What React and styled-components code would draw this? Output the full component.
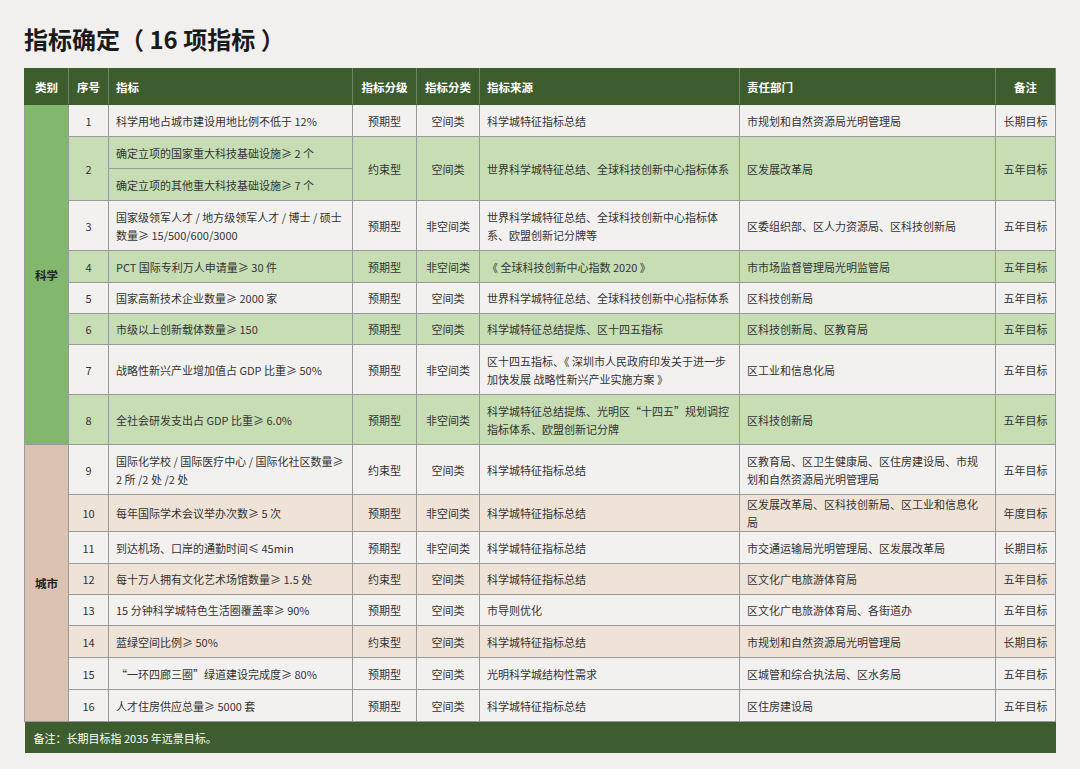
import React from 'react';
import styled, { createGlobalStyle } from 'styled-components';

const Global = createGlobalStyle`
  body {
    margin: 0;
    background: #f2f0ef;
    font-family: "Noto Sans CJK SC", "Noto Sans", sans-serif;
    color: #333;
  }
`

const Page = styled.div`
  padding: 22px 24px 0 24px;
  width: 1031px;
`

const Title = styled.h1`
  margin: 0 0 12px 0;
  font-size: 24px;
  font-weight: 700;
  color: #1a1a1a;
  line-height: 34px;
`

const Table = styled.table`
  width: 1031px;
  border-collapse: collapse;
  table-layout: fixed;
  font-size: 11px;
  line-height: 18px;
`

const Head = styled.th`
  background: #3d5d2f;
  color: #fff;
  font-weight: 700;
  font-size: 11.5px;
  height: 35px;
  padding: 0 7px;
  text-align: ${p => (p.$left ? 'left' : 'center')};
  border: 1px solid #3d5d2f;
  border-right-color: #6d8563;
`

const Row = styled.tr`
  height: ${p => p.$h}px;
  background: ${p => p.$bg};
`

const Cell = styled.td`
  border: 1px solid #9a9a9a;
  padding: 0 7px;
  text-align: ${p => (p.$left ? 'left' : 'center')};
  vertical-align: middle;
  color: #333;
`

const Cat = styled.td`
  border: 1px solid #9a9a9a;
  background: ${p => p.$bg};
  text-align: center;
  font-weight: 700;
  font-size: 11.5px;
  color: #222;
`

const Foot = styled.td`
  background: #3d5d2f;
  color: #fff;
  height: 31px;
  padding: 0 9px;
  font-size: 11px;
`

const W = '#f3f1f0', G = '#c7deb5', B = '#efe3d8';

const sci = [
  [1, '科学用地占城市建设用地比例不低于 12%', '预期型', '空间类', '科学城特征指标总结', '市规划和自然资源局光明管理局', '长期目标', W, 32],
  [2, null, '约束型', '空间类', '世界科学城特征总结、全球科技创新中心指标体系', '区发展改革局', '五年目标', G, 32],
  [3, '国家级领军人才 / 地方级领军人才 / 博士 / 硕士 数量≥ 15/500/600/3000', '预期型', '非空间类', '世界科学城特征总结、全球科技创新中心指标体系、欧盟创新记分牌等', '区委组织部、区人力资源局、区科技创新局', '五年目标', W, 50],
  [4, 'PCT 国际专利万人申请量≥ 30 件', '预期型', '非空间类', '《 全球科技创新中心指数 2020 》', '市市场监督管理局光明监管局', '五年目标', G, 32],
  [5, '国家高新技术企业数量≥ 2000 家', '预期型', '空间类', '世界科学城特征总结、全球科技创新中心指标体系', '区科技创新局', '五年目标', W, 31],
  [6, '市级以上创新载体数量≥ 150', '预期型', '空间类', '科学城特征总结提炼、区十四五指标', '区科技创新局、区教育局', '五年目标', G, 31],
  [7, '战略性新兴产业增加值占 GDP 比重≥ 50%', '预期型', '非空间类', '区十四五指标、《 深圳市人民政府印发关于进一步加快发展 战略性新兴产业实施方案 》', '区工业和信息化局', '五年目标', W, 50],
  [8, '全社会研发支出占 GDP 比重≥ 6.0%', '预期型', '非空间类', '科学城特征总结提炼、光明区“十四五”规划调控指标体系、欧盟创新记分牌', '区科技创新局', '五年目标', G, 50],
];

const city = [
  [9, '国际化学校 / 国际医疗中心 / 国际化社区数量≥ 2 所 /2 处 /2 处', '约束型', '空间类', '科学城特征指标总结', '区教育局、区卫生健康局、区住房建设局、市规划和自然资源局光明管理局', '五年目标', W, 50],
  [10, '每年国际学术会议举办次数≥ 5 次', '预期型', '非空间类', '科学城特征指标总结', '区发展改革局、区科技创新局、区工业和信息化局', '年度目标', B, 31],
  [11, '到达机场、口岸的通勤时间≤ 45min', '预期型', '非空间类', '科学城特征指标总结', '市交通运输局光明管理局、区发展改革局', '长期目标', W, 32],
  [12, '每十万人拥有文化艺术场馆数量≥ 1.5 处', '约束型', '空间类', '科学城特征指标总结', '区文化广电旅游体育局', '五年目标', B, 31],
  [13, '15 分钟科学城特色生活圈覆盖率≥ 90%', '预期型', '空间类', '市导则优化', '区文化广电旅游体育局、各街道办', '五年目标', W, 31],
  [14, '蓝绿空间比例≥ 50%', '约束型', '空间类', '科学城特征指标总结', '市规划和自然资源局光明管理局', '长期目标', B, 32],
  [15, '“一环四廊三圈”绿道建设完成度≥ 80%', '预期型', '空间类', '光明科学城结构性需求', '区城管和综合执法局、区水务局', '五年目标', W, 32],
  [16, '人才住房供应总量≥ 5000 套', '预期型', '空间类', '科学城特征指标总结', '区住房建设局', '五年目标', W, 32],
];

function Rows({ data, label, catBg }) {
  const span = data.reduce((n, r) => n + (r[1] === null ? 2 : 1), 0);
  const out = [];
  data.forEach((r, i) => {
    const [no, name, lvl, kind, src, dept, note, bg, h] = r;
    const cat = i === 0 ? <Cat rowSpan={span} $bg={catBg}>{label}</Cat> : null;
    if (name === null) {
      out.push(
        <Row key={no + 'a'} $bg={bg} $h={h}>
          {cat}
          <Cell rowSpan={2}>{no}</Cell>
          <Cell $left>确定立项的国家重大科技基础设施≥ 2 个</Cell>
          <Cell rowSpan={2}>{lvl}</Cell>
          <Cell rowSpan={2}>{kind}</Cell>
          <Cell rowSpan={2} $left>{src}</Cell>
          <Cell rowSpan={2} $left>{dept}</Cell>
          <Cell rowSpan={2}>{note}</Cell>
        </Row>,
        <Row key={no + 'b'} $bg={bg} $h={h}>
          <Cell $left>确定立项的其他重大科技基础设施≥ 7 个</Cell>
        </Row>
      );
    } else {
      out.push(
        <Row key={no} $bg={bg} $h={h}>
          {cat}
          <Cell>{no}</Cell>
          <Cell $left>{name}</Cell>
          <Cell>{lvl}</Cell>
          <Cell>{kind}</Cell>
          <Cell $left>{src}</Cell>
          <Cell $left>{dept}</Cell>
          <Cell>{note}</Cell>
        </Row>
      );
    }
  });
  return out;
}

export default function App() {
  return (
    <Page>
      <Global />
      <Title>指标确定（ 16 项指标 ）</Title>
      <Table>
        <colgroup>
          <col style={{ width: 44 }} />
          <col style={{ width: 40 }} />
          <col style={{ width: 244 }} />
          <col style={{ width: 64 }} />
          <col style={{ width: 63 }} />
          <col style={{ width: 260 }} />
          <col style={{ width: 256 }} />
          <col style={{ width: 60 }} />
        </colgroup>
        <thead>
          <tr>
            <Head>类别</Head>
            <Head>序号</Head>
            <Head $left>指标</Head>
            <Head>指标分级</Head>
            <Head>指标分类</Head>
            <Head $left>指标来源</Head>
            <Head $left>责任部门</Head>
            <Head>备注</Head>
          </tr>
        </thead>
        <tbody>
          <Rows data={sci} label="科学" catBg="#82b86d" />
          <Rows data={city} label="城市" catBg="#dcc2b0" />
          <tr>
            <Foot colSpan={8}>备注：长期目标指 2035 年远景目标。</Foot>
          </tr>
        </tbody>
      </Table>
    </Page>
  );
}
